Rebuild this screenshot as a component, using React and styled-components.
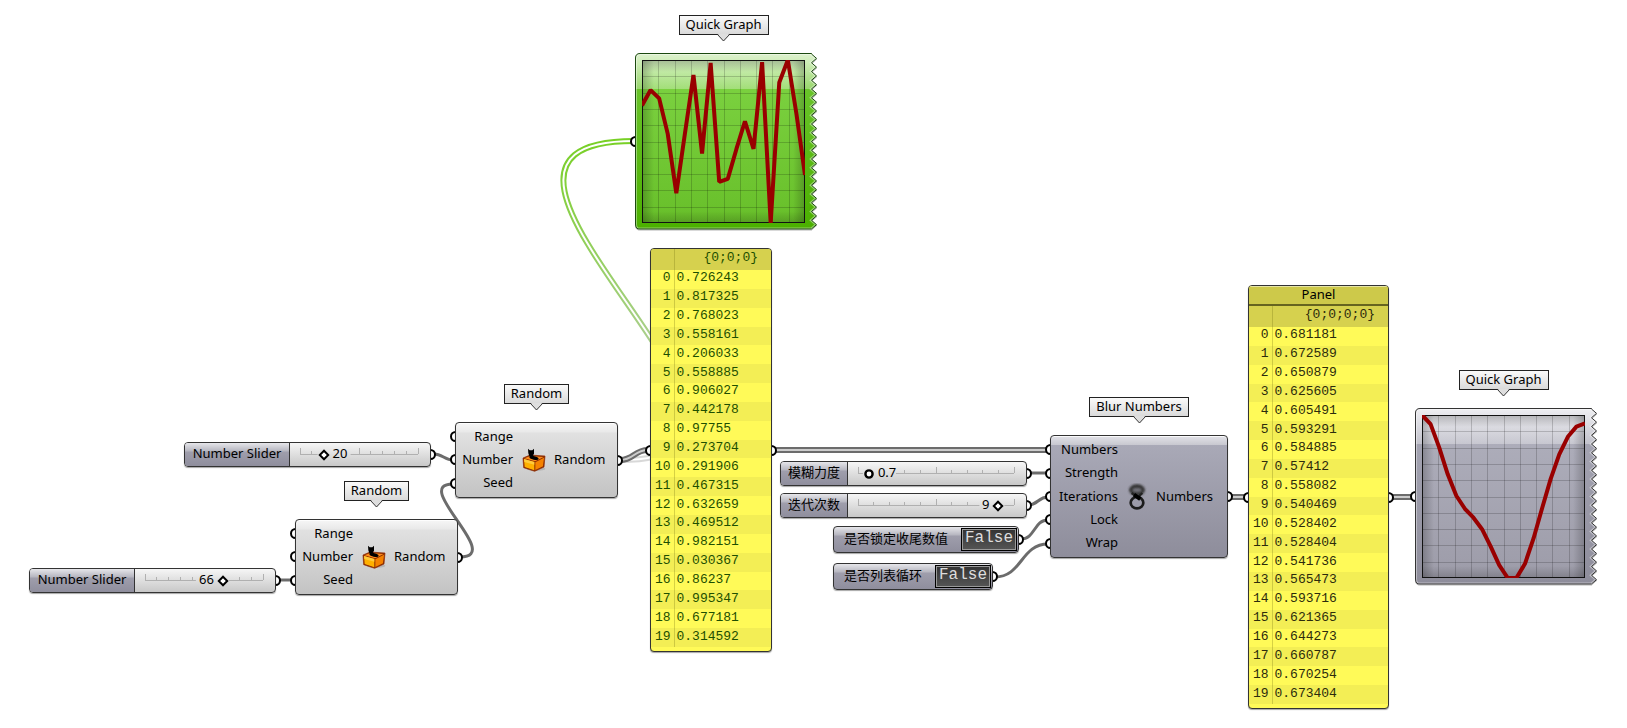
import React, { useState } from "react";
import styled, { createGlobalStyle, css } from "styled-components";

const GlobalStyle = createGlobalStyle`
  *, *::before, *::after { box-sizing: border-box; }
  body {
    margin: 0;
    background: #fff;
    color: #000;
    font-family: "Noto Sans", "Noto Sans CJK SC", sans-serif;
    font-size: 13px;
    line-height: 18px;
  }
`;

const Canvas = styled.main`
  position: relative;
  min-height: 100vh;
  overflow: hidden;
`;

const Wires = styled.svg`
  position: absolute;
  inset: 0;
  width: 100%;
  height: 100%;
  overflow: visible;
  fill: none;
`;

/* Free placement of a node on the canvas */
const Placed = styled.section`
  position: absolute;
  left: ${(p) => p.$x}px;
  top: ${(p) => p.$y}px;
  display: flex;
  flex-direction: column;
  align-items: center;
`;

const NodeFrame = styled.div`
  position: relative;
  isolation: isolate;
`;

const GripColumn = styled.div`
  position: absolute;
  z-index: 0;
  top: 0;
  bottom: 0;
  ${(p) => (p.$side === "left" ? "left: -5px;" : "right: -5px;")}
  padding: 3px 0;
  display: flex;
  flex-direction: column;
  justify-content: space-around;
`;

const Grip = styled.span`
  width: 11px;
  height: 11px;
  border: 2px solid #000;
  border-radius: 50%;
  background: #fff;
`;

function Grips({ side, count = 1 }) {
  return (
    <GripColumn $side={side}>
      {Array.from({ length: count }, (_, i) => (
        <Grip key={i} />
      ))}
    </GripColumn>
  );
}

/* Name tag above a node */
const Tag = styled.header`
  display: flex;
  flex-direction: column;
  align-items: center;
  height: 38px;
`;

const TagText = styled.h2`
  margin: 0;
  height: 20px;
  padding: 0 6px;
  border: 1px solid #222;
  background: linear-gradient(#fafafa, #dadada);
  font-size: 13px;
  font-weight: 400;
  line-height: 17px;
  white-space: nowrap;
`;

const TagPointer = styled.svg`
  display: block;
  margin-top: -1px;
`;

function NameTag({ children }) {
  return (
    <Tag>
      <TagText>{children}</TagText>
      <TagPointer width="13" height="8" viewBox="0 0 13 8">
        <path d="M0.8 0H12.2L6.5 7Z" fill="#dedede" />
        <path d="M0.5 0.5L6.5 7L12.5 0.5" fill="none" stroke="#333" />
      </TagPointer>
    </Tag>
  );
}

/* Components with inputs and outputs */
const ComponentBody = styled.div`
  position: relative;
  z-index: 1;
  display: grid;
  grid-template-columns: ${(p) => p.$columns};
  align-items: center;
  width: ${(p) => p.$width}px;
  height: ${(p) => p.$height}px;
  padding: 2px 0;
  border: 1px solid #333;
  border-radius: 4px;
  box-shadow: 0 1px 1px rgba(0, 0, 0, 0.35), inset 0 1px 0 rgba(255, 255, 255, 0.8);
  background: ${(p) =>
    p.$dark
      ? "linear-gradient(#e2e2e8 0, #c8c8d0 9px, #a9a9b7 9px, #8e8d9b 100%)"
      : "linear-gradient(#f6f6f6 0, #e9e9e9 9px, #e1e1e1 10px, #c3c3c3 100%)"};
`;

const PortList = styled.ul`
  margin: 0;
  padding: 0;
  list-style: none;
  height: 100%;
  display: flex;
  flex-direction: column;
  text-align: ${(p) => (p.$outputs ? "left" : "right")};
`;

const Port = styled.li`
  flex: 1;
  display: flex;
  align-items: center;
  justify-content: ${(p) => (p.$outputs ? "flex-start" : "flex-end")};
  line-height: 18px;
  padding-bottom: 2px;
`;

const IconCell = styled.div`
  display: flex;
  justify-content: center;
`;

function ComponentNode({ name, width, height, columns, dark, inputs, output, icon }) {
  return (
    <>
      <NameTag>{name}</NameTag>
      <NodeFrame>
        <Grips side="left" count={inputs.length} />
        <Grips side="right" />
        <ComponentBody $width={width} $height={height} $columns={columns} $dark={dark}>
          <PortList>
            {inputs.map((label) => (
              <Port key={label}>{label}</Port>
            ))}
          </PortList>
          <IconCell>{icon}</IconCell>
          <PortList $outputs>
            <Port $outputs>{output}</Port>
          </PortList>
        </ComponentBody>
      </NodeFrame>
    </>
  );
}

function HatIcon() {
  return (
    <svg width="24" height="24" viewBox="0 0 72 72" aria-hidden="true">
      <ellipse cx="42" cy="62" rx="28" ry="7" fill="#000" opacity="0.12" />
      <path d="M3 30L24 21L69 24L66 57L38 70L5 59Z" fill="#8a2c00" />
      <path d="M7 31L25 24L65 27L39 40Z" fill="#ff8c1a" />
      <path d="M6 33L37 42V67L8 57Z" fill="#ffb000" />
      <path d="M6 33L37 42V50L7 42Z" fill="#ffcb3a" />
      <path d="M40 43L66 29L63 55L40 66Z" fill="#f58200" />
      <path d="M3 30L24 21L69 24L66 57L38 70L5 59Z" fill="none" stroke="#8f2b00" strokeWidth="2" strokeLinejoin="round" />
      <ellipse cx="36" cy="30" rx="14" ry="5" fill="#000" transform="rotate(12 36 30)" />
      <path d="M18 2L23 7H31L36 2L36 17L33 22L39 29L28 31L22 25L19 16Z" fill="#000" />
    </svg>
  );
}

function BlurIcon() {
  return (
    <svg width="22" height="28" viewBox="0 0 66 84" aria-hidden="true">
      <defs>
        <filter id="soft" x="-30%" y="-30%" width="160%" height="160%">
          <feGaussianBlur stdDeviation="3" />
        </filter>
        <filter id="slight" x="-30%" y="-30%" width="160%" height="160%">
          <feGaussianBlur stdDeviation="2" />
        </filter>
      </defs>
      <g fill="none" filter="url(#soft)">
        <ellipse cx="33" cy="21" rx="19" ry="12" fill="#333" fillOpacity="0.4" stroke="#333" strokeWidth="10" />
      </g>
      <g fill="none" filter="url(#slight)">
        <path d="M17 30L28 38M49 30L38 40" stroke="#222" strokeWidth="7" />
        <ellipse cx="33" cy="59" rx="19" ry="17" stroke="#1c1c1c" strokeWidth="8" />
        <path d="M24 35L43 48" stroke="#000" strokeWidth="12" />
      </g>
    </svg>
  );
}

/* Number sliders */
const capsule = css`
  position: relative;
  z-index: 1;
  display: flex;
  border: 1px solid #333;
  border-radius: 4px;
  box-shadow: 0 1px 1px rgba(0, 0, 0, 0.35);
`;

const purple = "linear-gradient(#e6e6ea 0, #b6b6c0 8px, #9f9eac 9px, #8f8e9d 100%)";

const SliderBody = styled.div`
  ${capsule}
  height: 25px;
  background: linear-gradient(#f6f6f6, #e3e3e3 40%, #c8c8c8);
  overflow: hidden;
`;

const SliderLabel = styled.label`
  width: ${(p) => p.$width}px;
  border-right: 1px solid #333;
  background: ${purple};
  text-align: center;
  line-height: 20px;
  white-space: nowrap;
`;

const SliderTrack = styled.div`
  position: relative;
  padding: 0 12px 0 10px;
`;

const Ruler = styled.svg`
  display: block;
  height: 23px;
  stroke: #b0b0b0;
  overflow: visible;
`;

const thumb = css`
  appearance: none;
  width: 8px;
  height: 8px;
  border: 2px solid #000;
  border-radius: ${(p) => (p.$round ? "50%" : "0")};
  background: #fff;
  transform: ${(p) => (p.$round ? "scale(1.2)" : "rotate(45deg)")};
`;

const SliderInput = styled.input`
  appearance: none;
  position: absolute;
  top: 0;
  left: 6px;
  width: calc(100% - 14px);
  height: 23px;
  margin: 0;
  background: transparent;
  &::-webkit-slider-thumb {
    ${thumb}
  }
  &::-moz-range-thumb {
    ${thumb}
  }
`;

const SliderValue = styled.output`
  position: absolute;
  top: 0;
  line-height: 20px;
  transform: ${(p) => (p.$before ? "translateX(-100%)" : "none")};
  pointer-events: none;
`;

function NumberSlider({ id, label, labelWidth, initial, max, step = 1, rulerWidth }) {
  const [value, setValue] = useState(initial);
  const handle = (value / max) * rulerWidth;
  const before = value / max > 0.5;
  const text = String(value);
  const room = 9 + text.replace(".", "").length * 8;
  const gap = before ? [handle - room - 2, handle + 6] : [handle - 6, handle + room + 2];
  const ticks = Array.from({ length: 11 }, (_, i) => (i * rulerWidth) / 10).filter(
    (x) => x < gap[0] || x > gap[1]
  );
  return (
    <NodeFrame>
      <Grips side="right" />
      <SliderBody>
        <SliderLabel htmlFor={id} $width={labelWidth}>
          {label}
        </SliderLabel>
        <SliderTrack>
          <Ruler width={rulerWidth}>
            {gap[0] > 0 && <line x1="0" x2={gap[0]} y1="11.5" y2="11.5" />}
            {gap[1] < rulerWidth && <line x1={gap[1]} x2={rulerWidth} y1="11.5" y2="11.5" />}
            {ticks.map((x) => {
              const major = x === 0 || x === rulerWidth || x === rulerWidth / 2;
              const at = Math.floor(x) + 0.5;
              return <line key={x} x1={at} x2={at} y1={major ? 5 : 8} y2="11" />;
            })}
          </Ruler>
          <SliderInput
            id={id}
            type="range"
            min="0"
            max={max}
            step={step}
            value={value}
            $round={step < 1}
            onChange={(e) => setValue(Number(e.target.value))}
          />
          <SliderValue
            htmlFor={id}
            $before={before}
            style={{ left: 10 + handle + (before ? -9 : 9) }}
          >
            {text}
          </SliderValue>
        </SliderTrack>
      </SliderBody>
    </NodeFrame>
  );
}

/* Boolean toggles */
const ToggleBody = styled.div`
  ${capsule}
  align-items: center;
  justify-content: space-between;
  width: ${(p) => p.$width}px;
  height: 27px;
  padding: 0 1px 0 10px;
  background: ${purple};
`;

const ToggleLabel = styled.span`
  line-height: 18px;
  padding-bottom: 4px;
  white-space: nowrap;
`;

const ToggleButton = styled.button`
  width: 56px;
  height: 23px;
  padding: 0 0 3px;
  border: 1px solid #000;
  box-shadow: inset 0 0 0 1px #999;
  background: linear-gradient(#333, #555);
  color: #ddd;
  font-family: "Liberation Mono", monospace;
  font-size: 16px;
  line-height: 18px;
`;

function BooleanToggle({ id, label, width }) {
  const [on, setOn] = useState(false);
  return (
    <NodeFrame>
      <Grips side="right" />
      <ToggleBody $width={width}>
        <ToggleLabel id={id}>{label}</ToggleLabel>
        <ToggleButton type="button" aria-labelledby={id} aria-pressed={on} onClick={() => setOn(!on)}>
          {on ? "True" : "False"}
        </ToggleButton>
      </ToggleBody>
    </NodeFrame>
  );
}

/* Yellow data panels */
const PanelBody = styled.div`
  position: relative;
  z-index: 1;
  width: ${(p) => p.$width}px;
  padding-bottom: 4px;
  border: 1px solid #333;
  border-radius: 4px;
  box-shadow: 0 1px 1px rgba(0, 0, 0, 0.35);
  background: #fffa58;
  overflow: hidden;
`;

const PanelTitle = styled.h2`
  margin: 0;
  height: 20px;
  border-bottom: 2px solid #66641f;
  background: #cdc94a;
  box-shadow: inset 0 1px 0 rgba(255, 255, 255, 0.5);
  font-size: 13px;
  font-weight: 400;
  line-height: 17px;
  text-align: center;
`;

const PanelTable = styled.table`
  width: 100%;
  height: 398px;
  border-collapse: collapse;
  table-layout: fixed;
  color: ${(p) => p.$ink};
  font-family: "Liberation Mono", monospace;
  font-size: 13px;
  line-height: 14px;
  th, td {
    padding: 0 0 2px 2px;
    font-weight: 400;
    text-align: left;
  }
  thead tr { height: 21px; background: #d6d14e; }
  thead th:last-child { text-align: right; padding: 0 13px 4px 0; }
  tbody tr:nth-child(even) { background: #f3ee55; }
  tr > :first-child {
    width: 23px;
    padding: 0 3px 2px 0;
    text-align: right;
    border-right: 1px solid rgba(120, 115, 20, 0.3);
  }
`;

function DataPanel({ title, path, values, width, ink }) {
  return (
    <NodeFrame>
      <Grips side="left" />
      <Grips side="right" />
      <PanelBody $width={width}>
        {title && <PanelTitle>{title}</PanelTitle>}
        <PanelTable $ink={ink}>
          <thead>
            <tr>
              <th aria-label="Index" />
              <th scope="col">{path}</th>
            </tr>
          </thead>
          <tbody>
            {values.map((value, i) => (
              <tr key={i}>
                <th scope="row">{i}</th>
                <td>{value}</td>
              </tr>
            ))}
          </tbody>
        </PanelTable>
      </PanelBody>
    </NodeFrame>
  );
}

/* Graphs */
const GraphDrawing = styled.svg`
  position: relative;
  z-index: 1;
  display: block;
  overflow: visible;
`;

const TEETH = 20;
const tornEdge = Array.from({ length: TEETH }, (_, i) => {
  const y = 1 + (i * 175) / TEETH;
  const h = 175 / TEETH;
  return `L181.5 ${y + h / 2}L176.5 ${y + h}`;
}).join("");
const graphOutline = `M5 0.5H176.5V1${tornEdge}H5Q0.5 176.5 0.5 171V5Q0.5 0.5 5 0.5Z`;

const graphThemes = {
  green: { frame: ["#70c934", "#4bb000"], plot: ["#7ed443", "#68bf2a"], glow: "#dff3d0", edge: "#1c4a10" },
  gray: { frame: ["#a9a9b7", "#8e8d9b"], plot: ["#b0b0bd", "#9d9ca9"], glow: "#efeff2", edge: "#333" },
};

function QuickGraph({ id, theme, values }) {
  const c = graphThemes[theme];
  const nums = values.map(Number);
  const min = Math.min(...nums);
  const max = Math.max(...nums);
  const points = nums
    .map((v, i) => `${7 + (i * 163) / (nums.length - 1)},${170 - ((v - min) / (max - min)) * 163}`)
    .join(" ");
  const u = (name) => `url(#${id}-${name})`;
  return (
    <>
      <NameTag>Quick Graph</NameTag>
      <NodeFrame>
        <Grips side="left" />
        <GraphDrawing width="177" height="177" role="img" aria-label="Quick Graph">
          <defs>
            <linearGradient id={`${id}-frame`} x2="0" y2="1">
              <stop stopColor={c.frame[0]} />
              <stop offset="1" stopColor={c.frame[1]} />
            </linearGradient>
            <linearGradient id={`${id}-plot`} x2="0" y2="1">
              <stop stopColor={c.plot[0]} />
              <stop offset="1" stopColor={c.plot[1]} />
            </linearGradient>
            <linearGradient id={`${id}-glow`} x2="0" y2="1">
              <stop stopColor={c.glow} />
              <stop offset="1" stopColor={c.glow} stopOpacity="0.4" />
            </linearGradient>
            <linearGradient id={`${id}-down`} x2="0" y2="1">
              <stop stopOpacity="0.22" />
              <stop offset="1" stopOpacity="0" />
            </linearGradient>
            <linearGradient id={`${id}-right`}>
              <stop stopOpacity="0.22" />
              <stop offset="1" stopOpacity="0" />
            </linearGradient>
            <linearGradient id={`${id}-left`}>
              <stop stopOpacity="0" />
              <stop offset="1" stopOpacity="0.22" />
            </linearGradient>
            <linearGradient id={`${id}-up`} x2="0" y2="1">
              <stop stopOpacity="0" />
              <stop offset="1" stopOpacity="0.18" />
            </linearGradient>
            <clipPath id={`${id}-outline`}>
              <path d={graphOutline} />
            </clipPath>
            <clipPath id={`${id}-area`}>
              <rect x="7" y="7" width="163" height="163" />
            </clipPath>
          </defs>
          <path d={graphOutline} transform="translate(0 1)" stroke="#000" strokeOpacity="0.3" fill="none" />
          <g clipPath={u("outline")}>
            <path d={graphOutline} fill={u("frame")} />
            <rect x="7" y="7" width="163" height="163" fill={u("plot")} />
            <rect width="182" height="36" fill={u("glow")} />
            <path d={graphOutline} fill="none" stroke="#fff" strokeOpacity="0.4" strokeWidth="3" />
          </g>
          <path d={graphOutline} fill="none" stroke={c.edge} />
          {Array.from({ length: 9 }, (_, i) => {
            const at = Math.round(7 + (i + 1) * 16.3) + 0.5;
            return (
              <path key={i} d={`M${at} 7V170M7 ${at}H170`} stroke="#000" strokeOpacity="0.18" fill="none" />
            );
          })}
          <rect x="7" y="7" width="163" height="12" fill={u("down")} />
          <rect x="7" y="158" width="163" height="12" fill={u("up")} />
          <rect x="7" y="7" width="12" height="163" fill={u("right")} />
          <rect x="158" y="7" width="12" height="163" fill={u("left")} />
          <rect x="7.5" y="7.5" width="162" height="162" fill="none" stroke="#111" />
          <polyline
            clipPath={u("area")}
            points={points}
            fill="none"
            stroke="#990000"
            strokeWidth="4"
            strokeLinejoin="bevel"
          />
        </GraphDrawing>
      </NodeFrame>
    </>
  );
}

const randomValues = [
  "0.726243", "0.817325", "0.768023", "0.558161", "0.206033", "0.558885", "0.906027",
  "0.442178", "0.97755", "0.273704", "0.291906", "0.467315", "0.632659", "0.469512",
  "0.982151", "0.030367", "0.86237", "0.995347", "0.677181", "0.314592",
];

const blurredValues = [
  "0.681181", "0.672589", "0.650879", "0.625605", "0.605491", "0.593291", "0.584885",
  "0.57412", "0.558082", "0.540469", "0.528402", "0.528404", "0.541736", "0.565473",
  "0.593716", "0.621365", "0.644273", "0.660787", "0.670254", "0.673404",
];

const singleWires = [
  "M434 454C442 454 445 460 453 460",
  "M278 580H293",
  "M460 557C505 557 410 484 453 484",
  "M1028 473H1048",
  "M1028 505C1038 505 1038 497 1048 497",
  "M1021 539C1035 539 1034 520 1048 520",
  "M995 577C1022 577 1021 544 1048 544",
];

const listWires = [
  "M620 460C634 460 634 450 648 450",
  "M774 450H1048",
  "M1230 497H1246",
  "M1390 497H1413",
];

const selectedWire = "M620 460C852 460 397 141 634 141";

export default function App() {
  return (
    <Canvas>
      <GlobalStyle />
      <Wires aria-hidden="true">
        <defs>
          <linearGradient id="fade" gradientUnits="userSpaceOnUse" x1="0" y1="460" x2="0" y2="141">
            <stop stopColor="#d8d8d8" />
            <stop offset="0.4" stopColor="#a8cf88" />
            <stop offset="1" stopColor="#78d026" />
          </linearGradient>
        </defs>
        <path d={selectedWire} stroke="url(#fade)" strokeWidth="6" />
        <path d={selectedWire} stroke="#fff" strokeWidth="2" />
        {singleWires.map((d) => (
          <path key={d} d={d} stroke="#6c6c6c" strokeWidth="3" />
        ))}
        {listWires.map((d) => (
          <g key={d}>
            <path d={d} stroke="#6c6c6c" strokeWidth="6" />
            <path d={d} stroke="#ccc" strokeWidth="2" />
          </g>
        ))}
      </Wires>

      <Placed $x={635} $y={15}>
        <QuickGraph id="raw" theme="green" values={randomValues} />
      </Placed>

      <Placed $x={184} $y={442}>
        <NumberSlider id="count" label="Number Slider" labelWidth={105} initial={20} max={100} rulerWidth={118} />
      </Placed>
      <Placed $x={29} $y={568}>
        <NumberSlider id="seed" label="Number Slider" labelWidth={105} initial={66} max={100} rulerWidth={118} />
      </Placed>

      <Placed $x={295} $y={481}>
        <ComponentNode
          name="Random"
          width={163}
          height={76}
          columns="57px 41px 1fr"
          inputs={["Range", "Number", "Seed"]}
          output="Random"
          icon={<HatIcon />}
        />
      </Placed>
      <Placed $x={455} $y={384}>
        <ComponentNode
          name="Random"
          width={163}
          height={76}
          columns="57px 41px 1fr"
          inputs={["Range", "Number", "Seed"]}
          output="Random"
          icon={<HatIcon />}
        />
      </Placed>

      <Placed $x={650} $y={248}>
        <DataPanel path="{0;0;0}" values={randomValues} width={122} ink="#1d4f00" />
      </Placed>

      <Placed $x={780} $y={461}>
        <NumberSlider id="strength" label="模糊力度" labelWidth={67} initial={0.7} max={10} step={0.1} rulerWidth={156} />
      </Placed>
      <Placed $x={780} $y={493}>
        <NumberSlider id="iterations" label="迭代次数" labelWidth={67} initial={9} max={10} rulerWidth={156} />
      </Placed>
      <Placed $x={833} $y={526}>
        <BooleanToggle id="lock" label="是否锁定收尾数值" width={186} />
      </Placed>
      <Placed $x={833} $y={563}>
        <BooleanToggle id="wrap" label="是否列表循环" width={160} />
      </Placed>

      <Placed $x={1050} $y={397}>
        <ComponentNode
          name="Blur Numbers"
          dark
          width={178}
          height={123}
          columns="67px 38px 1fr"
          inputs={["Numbers", "Strength", "Iterations", "Lock", "Wrap"]}
          output="Numbers"
          icon={<BlurIcon />}
        />
      </Placed>

      <Placed $x={1248} $y={285}>
        <DataPanel title="Panel" path="{0;0;0;0}" values={blurredValues} width={141} ink="#2c2b0c" />
      </Placed>

      <Placed $x={1415} $y={370}>
        <QuickGraph id="blurred" theme="gray" values={blurredValues} />
      </Placed>
    </Canvas>
  );
}
